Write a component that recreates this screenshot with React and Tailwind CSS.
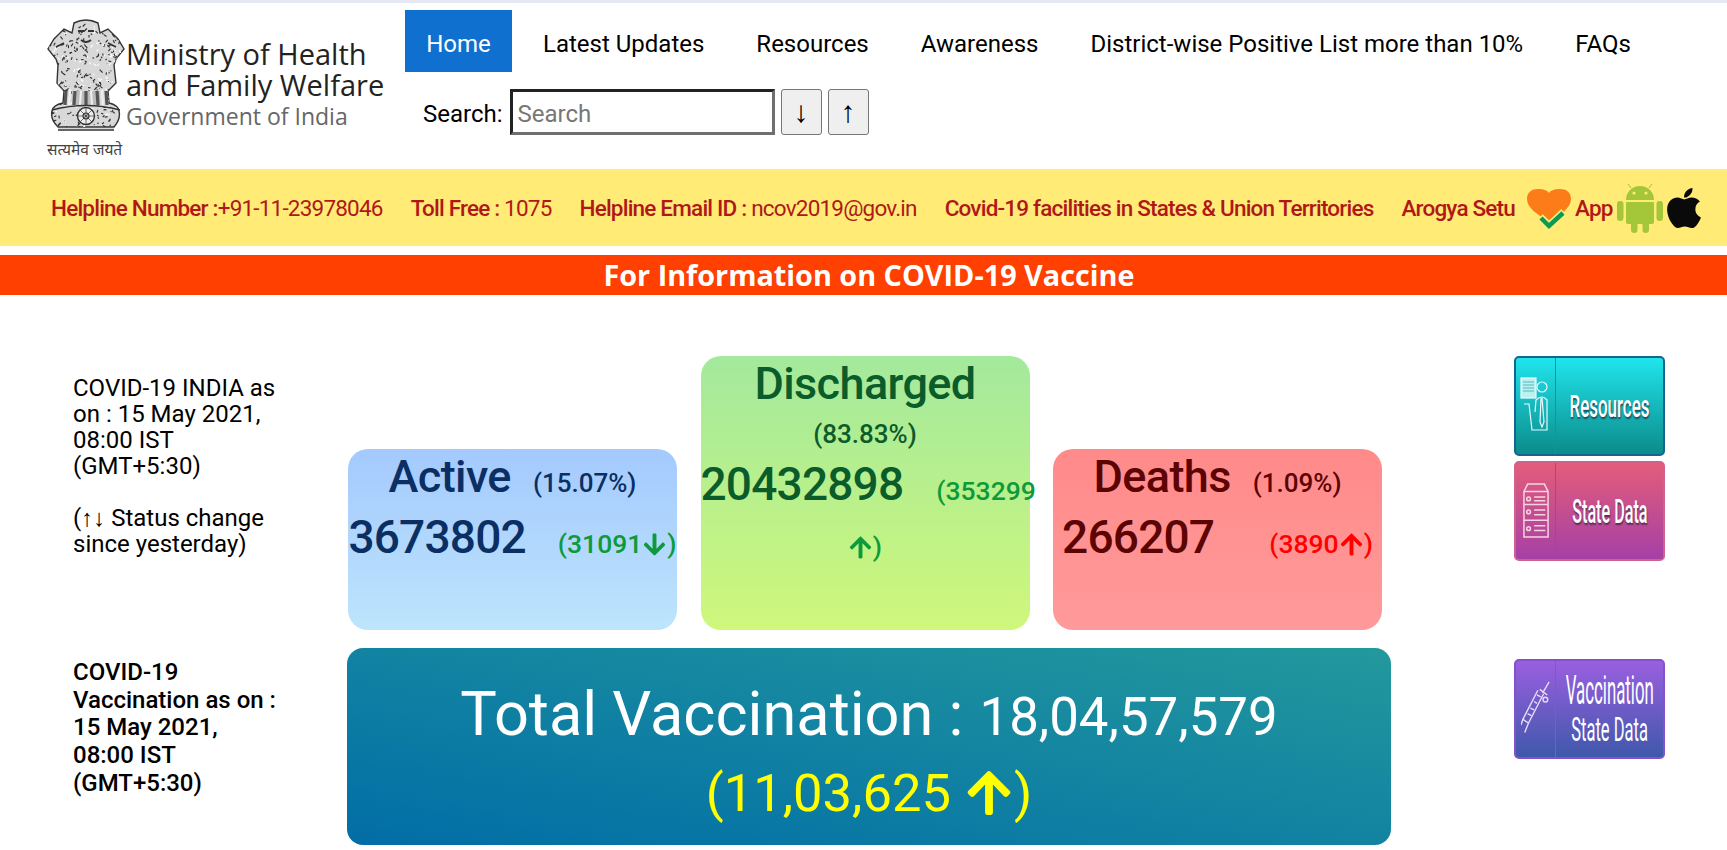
import { FaApple, FaArrowDown, FaArrowUp } from 'react-icons/fa';

const roboto = "font-['Roboto',sans-serif]";
const segoe = "font-['Open_Sans','Noto_Sans',sans-serif]";
const arial = "font-['Liberation_Sans',sans-serif]";

// short engraving strokes for the emblem texture
let seed = 17;
const rnd = () => {
  seed = (seed * 16807) % 2147483647;
  return seed / 2147483647;
};
const hatch = Array.from({ length: 420 }, () => ({
  x: rnd() * 76,
  y: rnd() * 112,
  dx: (rnd() - 0.5) * 6,
  dy: (rnd() - 0.5) * 6,
}));

const crest =
  'M26 4 Q38 -2 50 4 L52 14 L60 10 L70 20 L76 30 L68 40 L66 46 L68 64 L60 72 L61 84 Q70 86 71 92 Q73 100 66 108 L10 108 Q2 100 4 92 Q5 86 15 84 L16 72 L9 64 L10 46 L8 40 L0 30 L6 20 L16 10 L24 14 Z';

function Emblem() {
  return (
    <svg viewBox="0 0 76 112" className="w-[78px] h-[112px] block" fill="none" stroke="#333">
      <defs>
        <clipPath id="crest">
          <path d={crest} />
        </clipPath>
      </defs>
      <path d={crest} fill="#d8d8d8" strokeWidth="1.4" />
      <g clipPath="url(#crest)">
        {hatch.map((h, i) => (
          <path key={i} d={`M${h.x} ${h.y} l${h.dx} ${h.dy}`} strokeWidth="1.1" stroke={i % 3 === 0 ? '#ffffff' : '#2c2c2c'} />
        ))}
        <rect x="24" y="72" width="28" height="14" fill="#bcbcbc" stroke="none" />
        <path d="M18 72 L17 86 M27 72 L26 86 M38 72 L38 86 M49 72 L50 86 M58 72 L59 86" strokeWidth="3.2" stroke="#555" />
        <path d="M22 72 L21 86 M33 72 L32 86 M43 72 L44 86 M54 72 L55 86" strokeWidth="2.2" stroke="#eee" />
      </g>
      <path d="M30 12 h6 M40 12 h6 M33 21 q5 4 10 0 M8 28 l8 -4 M68 28 l-8 -4" strokeWidth="1.8" />
      <path d="M4 91 Q38 82 72 91" strokeWidth="1.4" />
      <circle cx="38" cy="97" r="8.5" fill="#ededed" strokeWidth="1.4" />
      <circle cx="38" cy="97" r="3" strokeWidth="1.1" />
      <path d="M38 89 v16 M30 97 h16 M32 91 l12 12 M44 91 l-12 12" strokeWidth="0.7" />
      <path d="M10 111 H66" strokeWidth="2.4" stroke="#666" />
    </svg>
  );
}

function Heart() {
  return (
    <svg viewBox="0 0 44 44" className="w-[44px] h-[44px] shrink-0 ml-[12px] mt-[5px]">
      <path d="M22 34 C10 26 0 20 0 11 C0 4 5 1 11 1 C16 1 20 2 22 5 C24 2 28 1 33 1 C39 1 44 4 44 11 C44 20 34 26 22 34 Z" fill="#fb7c19" />
      <path d="M13 29 L22 38 L37 24" fill="none" stroke="#ffeb76" strokeWidth="8" />
      <path d="M14 30 L22 38 L36 25" fill="none" stroke="#0a9a55" strokeWidth="4.5" />
    </svg>
  );
}

function Android() {
  return (
    <svg viewBox="0 0 46 50" className="w-[46px] h-[50px] shrink-0 ml-[4px]" fill="#a4c639">
      <path d="M9 17 A14 14 0 0 1 37 17 Z" />
      <path d="M14 5 L11 1 M32 5 L35 1" stroke="#a4c639" strokeWidth="1" />
      <circle cx="17" cy="10" r="1.6" fill="#ffeb76" />
      <circle cx="29" cy="10" r="1.6" fill="#ffeb76" />
      <path d="M9 19 H37 V39 Q37 41 35 41 H11 Q9 41 9 39 Z" />
      <rect x="0" y="18" width="6.5" height="20" rx="3.2" />
      <rect x="39.5" y="18" width="6.5" height="20" rx="3.2" />
      <rect x="14" y="38" width="6.5" height="12" rx="3.2" />
      <rect x="25.5" y="38" width="6.5" height="12" rx="3.2" />
    </svg>
  );
}

function Side({ top, bottom, edge, divider, icon, children }) {
  return (
    <div
      className="w-[151px] h-[100px] rounded-[5px] border-2 flex overflow-hidden"
      style={{ background: `linear-gradient(${top}, ${bottom})`, borderColor: edge }}
    >
      <div className="w-[40px] shrink-0 border-r flex items-center justify-center" style={{ borderColor: divider }}>
        {icon}
      </div>
      <div className={`flex-1 min-w-0 flex flex-col items-center justify-center text-white font-medium whitespace-nowrap ${roboto}`}>
        {children}
      </div>
    </div>
  );
}

function StatCard({ title, pct, count, delta, up, dark, deltaColor, from, to, tall, gap }) {
  const Arrow = up ? FaArrowUp : FaArrowDown;
  return (
    <div
      className={`w-[329px] rounded-[20px] text-center ${tall ? 'h-[274px] pt-[31px]' : 'h-[181px] pt-[31px]'}'`}
      style={{ background: `linear-gradient(${from}, ${to})` }}
    >
      <div style={{ color: dark }} className="text-[45px] leading-[56px] font-medium tracking-[-0.6px]">
        {title}
        {!tall && <span className="text-[26px] leading-none tracking-normal ml-[22px]">{pct}</span>}
      </div>
      {tall && <div style={{ color: dark }} className="text-[26px] font-medium leading-[34px] mt-[5px]">{pct}</div>}
      <div className={`text-[46px] leading-[56px] font-medium tracking-[-0.8px] ${tall ? 'mt-[5px]' : 'mt-[4px]'}`} style={{ color: dark }}>
        {count}
        <span className="text-[26.5px] leading-none tracking-normal" style={{ color: deltaColor, marginLeft: gap }}>
          ({delta}
          <Arrow className="inline-block w-[25px] h-[25px] align-[-4px]" />)
        </span>
      </div>
    </div>
  );
}

export default function App() {
  return (
    <div className={`min-h-[850px] bg-white overflow-hidden ${roboto}`}>
      <div className="h-[3px] bg-[#e6e9f5]" />

      <header className="h-[166px] flex">
        <div className="w-[405px] shrink-0 pl-[47px] pt-[16px] flex">
          <div className="w-[79px] shrink-0">
            <Emblem />
            <div className="text-[15.5px] leading-[18px] mt-[9px] text-[#444] whitespace-nowrap font-['Noto_Sans','DejaVu_Sans',sans-serif]">सत्यमेव जयते</div>
          </div>
          <div className={`pt-[19px] ${segoe}`}>
            <div className="text-[29px] leading-[31px] text-[#222] whitespace-nowrap">Ministry of Health</div>
            <div className="text-[29px] leading-[31px] text-[#222] whitespace-nowrap">and Family Welfare</div>
            <div className="text-[23px] leading-[32px] text-[#666] whitespace-nowrap">Government of India</div>
          </div>
        </div>
        <div className="pt-[7px]">
          <nav className="flex text-[24px] h-[62px] items-center text-black whitespace-nowrap">
            <a className="bg-[#0f70d0] text-white h-[62px] w-[107px] flex items-center justify-center pt-[5px]">Home</a>
            <a className="ml-[31px] pt-[5px]">Latest Updates</a>
            <a className="ml-[52px] pt-[5px]">Resources</a>
            <a className="ml-[52px] pt-[5px]">Awareness</a>
            <a className="ml-[52px] pt-[5px]">District-wise Positive List more than 10%</a>
            <a className="ml-[52px] pt-[5px]">FAQs</a>
          </nav>
          <div className="flex items-center mt-[17px] ml-[18px] h-[46px]">
            <span className="text-[24px] mr-[7px] pt-[3px]">Search:</span>
            <input
              placeholder="Search"
              className="w-[265px] h-[46px] px-[5px] pt-[3px] text-[24px] border-[3px] border-t-[#222] border-l-[#222] border-r-[#6f6f6f] border-b-[#6f6f6f] outline-none placeholder:text-[#777]"
            />
            <button className={`w-[41px] h-[46px] ml-[6px] rounded-[3px] bg-[#efefef] border border-[#767676] text-[30px] leading-none ${arial}`}>↓</button>
            <button className={`w-[41px] h-[46px] ml-[6px] rounded-[3px] bg-[#efefef] border border-[#767676] text-[30px] leading-none ${arial}`}>↑</button>
          </div>
        </div>
      </header>

      <div className="h-[77px] bg-[#ffeb76] flex items-center pl-[51px] text-[22.5px] text-[#b01818] whitespace-nowrap tracking-[-0.8px]">
        <span className="pt-[3px]"><span className="font-medium">Helpline Number :</span>+91-11-23978046</span>
        <span className="ml-[28px] pt-[3px]"><span className="font-medium">Toll Free :</span> 1075</span>
        <span className="ml-[28px] pt-[3px]"><span className="font-medium">Helpline Email ID :</span> ncov2019@gov.in</span>
        <span className="ml-[28px] pt-[3px] font-medium">Covid-19 facilities in States &amp; Union Territories</span>
        <span className="ml-[28px] pt-[3px] font-medium">Arogya Setu</span>
        <Heart />
        <span className="ml-[4px] pt-[3px] font-medium">App</span>
        <Android />
        <FaApple className="w-[40px] h-[46px] text-[#0a0a0a] shrink-0 ml-[1px]" />
      </div>

      <div className={`h-[40px] mt-[9px] pl-[11px] bg-[#ff4000] text-white text-center text-[28.8px] leading-[40px] font-bold ${segoe}`}>
        For Information on COVID-19 Vaccine
      </div>

      <main className="flex mt-[61px]">
        <div className="w-[348px] shrink-0 pl-[73px] text-[24px] text-black">
          <div className="h-[291px] pt-[19px] leading-[26px]">
            <p>COVID-19 INDIA as<br />on : 15 May 2021,<br />08:00 IST<br />(GMT+5:30)</p>
            <p className="mt-[26px]">(<span className={arial}>↑↓</span> Status change<br />since yesterday)</p>
          </div>
          <p className="font-medium leading-[27.7px] mt-[12px]">COVID-19<br />Vaccination as on :<br />15 May 2021,<br />08:00 IST<br />(GMT+5:30)</p>
        </div>

        <div className="w-[1166px] shrink-0">
          <div className="flex items-end gap-[23.5px]">
            <StatCard title="Active" pct="(15.07%)" count="3673802" delta="31091" dark="#0b2f63" deltaColor="#0e9a3a" from="#a4c9fe" to="#bde5fc" gap="32px" />
            <StatCard tall title="Discharged" pct="(83.83%)" count="20432898" delta="353299" up dark="#0a5c2b" deltaColor="#0e9a3a" from="#a3e99d" to="#cff77b" gap="33px" />
            <StatCard title="Deaths" pct="(1.09%)" count="266207" delta="3890" up dark="#5c0303" deltaColor="#ff0000" from="#ff8a8a" to="#ff9a9a" gap="55px" />
          </div>
          <div className="mt-[18px] -ml-[1px] w-[1044px] h-[197px] rounded-[16px] text-center bg-linear-to-tr from-[#036da6] to-[#23989c] pt-[28px]">
            <div className="text-white text-[61.3px] leading-[76px]">
              Total Vaccination :
              <span className="text-[52.8px] leading-none ml-[16px]">18,04,57,579</span>
            </div>
            <div className="text-[#ffff00] text-[52.5px] leading-[76px] mt-[3px]">
              (11,03,625
              <FaArrowUp className="inline-block w-[50px] h-[50px] ml-[13px] align-[-7px]" />)
            </div>
          </div>
        </div>

        <div className="flex flex-col">
          <Side
            top="#1fe5ec"
            bottom="#0c8b8b"
            edge="#16658f"
            divider="#1a8fa0"
            icon={
              <svg viewBox="0 0 32 60" className="w-[32px] h-[60px]" fill="none" stroke="#e6fbff" strokeWidth="1.2">
                <rect x="1" y="2" width="15" height="20" fill="#bff0f0" />
                <path d="M3 6 h11 M3 9 h11 M3 12 h11 M3 15 h11" stroke="#4fbcc0" />
                <circle cx="22" cy="11" r="5" />
                <path d="M4 28 h5 l3 26 h15 v-30 q-5 -6 -11 0 l-1 12 M21 22 l-1 24 l2 5 l2 -5 l-2 -24" />
              </svg>
            }
          >
            <span className="text-[32px] leading-none scale-x-[0.53] [text-shadow:1px_2px_2px_rgba(40,30,60,0.7)]">Resources</span>
          </Side>
          <div className="mt-[5px]">
            <Side
              top="#e35d7b"
              bottom="#a63fa6"
              edge="#d0608e"
              divider="#8c4fa8"
              icon={
                <svg viewBox="0 0 28 62" className="w-[26px] h-[60px]" fill="none" stroke="#f6d4e0" strokeWidth="1.6">
                  <path d="M5 2 h18 l4 8 v14 h-26 v-14 Z M1 24 h26 v17 h-26 Z M1 41 h26 v18 h-26 Z M1 10 h26" />
                  <path d="M12 16 h12 M12 20 h12 M12 30 h12 M12 35 h12 M12 47 h12 M12 52 h12" />
                  <circle cx="6" cy="18" r="2" />
                  <circle cx="6" cy="32" r="2" />
                  <circle cx="6" cy="50" r="2" />
                </svg>
              }
            >
              <span className="text-[33px] leading-none scale-x-[0.49] [text-shadow:1px_2px_2px_rgba(40,30,60,0.7)]">State Data</span>
            </Side>
          </div>
          <div className="mt-[98px]">
            <Side
              top="#9a5fe0"
              bottom="#3f58ab"
              edge="#8452c8"
              divider="#3f7fb0"
              icon={
                <svg viewBox="0 0 32 62" className="w-[30px] h-[60px]" fill="none" stroke="#e8dcf8" strokeWidth="1.5">
                  <path d="M30 2 L23 14 M20 10 L28 16 M24 15 L8 46 L2 42 L18 11 M8 46 L4 56 M2 42 L0 48 M7 36 L11 38 M10 30 L14 32 M14 23 L17 25 M17 16 L21 18" />
                  <circle cx="26" cy="21" r="2.5" />
                </svg>
              }
            >
              <span className="text-[40px] leading-[42px] font-normal scale-x-[0.42]">Vaccination</span>
              <span className="text-[33px] leading-[36px] font-normal scale-x-[0.5]">State Data</span>
            </Side>
          </div>
        </div>
      </main>
    </div>
  );
}
